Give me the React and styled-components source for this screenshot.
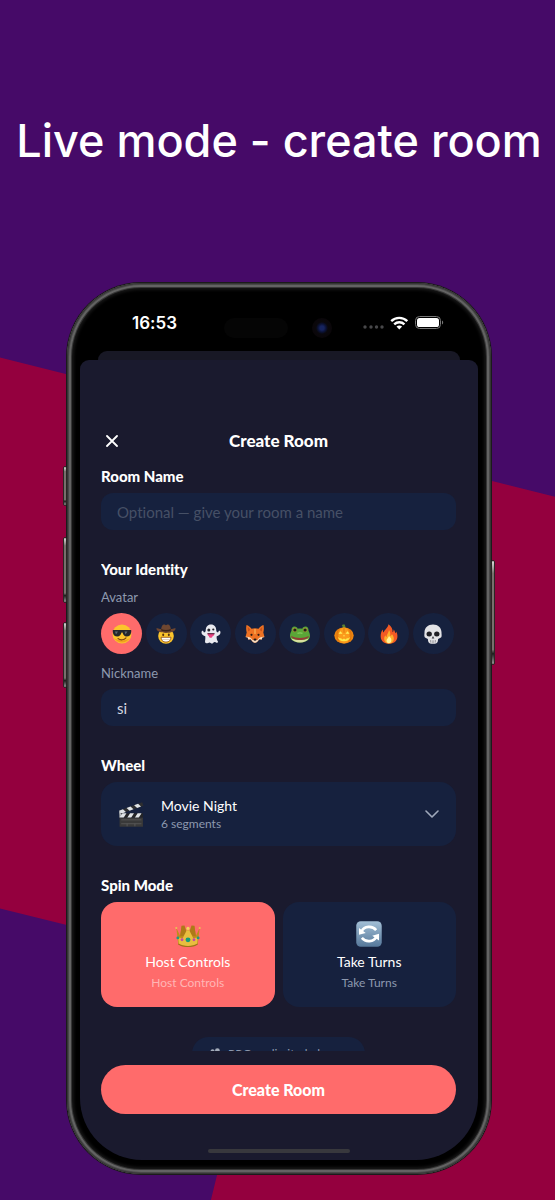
import React, { useState } from 'react';
import styled, { createGlobalStyle } from 'styled-components';

const GlobalStyle = createGlobalStyle`
  * {
    box-sizing: border-box;
  }
  body {
    margin: 0;
    background: #460a68;
  }
  button, input, select {
    font: inherit;
    color: inherit;
  }
`;

const Page = styled.main`
  position: relative;
  display: flex;
  flex-direction: column;
  height: 100vh;
  min-height: 1000px;
  overflow: hidden;
  background: #460a68;
  color: #fff;
  font-family: Lato, 'Open Sans', sans-serif;
  font-variant-ligatures: none;

  &::before {
    content: '';
    position: absolute;
    inset: 0;
    background: #94003e;
    clip-path: polygon(0 29.8%, 100% 41.4%, 100% 100%, 38% 100%, 48% 81.2%, 0 75.7%);
  }
`;

const Headline = styled.h1`
  position: relative;
  margin: 0;
  padding: 113px 0 114px 3px;
  font-family: Inter, sans-serif;
  font-size: 45px;
  font-weight: 500;
  line-height: 56px;
  text-align: center;
  white-space: nowrap;
`;

const Phone = styled.div`
  position: relative;
  display: flex;
  flex: 1;
  flex-direction: column;
  min-height: 0;
  margin: 0 64px 26px 67px;
  padding: 14px 13px;
  border-radius: 74px;
  background: #000;
  box-shadow:
    0 0 0 1px #1b1b1b,
    inset 0 0 0 1px #343434,
    inset 0 0 0 2px #484848,
    inset 0 0 0 4px #636363,
    inset 0 0 0 5px #363636,
    inset 0 0 3px 7px #161616;
`;

const SideButton = styled.span`
  position: absolute;
  top: ${props => props.$top};
  ${props => props.$side}: -4px;
  width: 4px;
  height: ${props => props.$height};
  border-radius: 2px;
  border: 1px solid #2b2624;
  background: linear-gradient(#ddd, #77706c 12%, #77706c 86%, #1d1d1d 90%, #999);
`;

const StatusBar = styled.div`
  display: flex;
  align-items: center;
  flex: none;
  height: 54px;
  padding: 0 34px 2px 52px;
`;

const Clock = styled.time`
  flex: 1;
  font-family: Inter, sans-serif;
  font-size: 17px;
  font-weight: 600;
`;

const Island = styled.span`
  display: flex;
  justify-content: space-between;
  width: 108px;
  margin: 10px 30px 0 0;
`;

const Speaker = styled.span`
  width: 64px;
  height: 20px;
  border-radius: 10px;
  background: #050505;
`;

const Lens = styled.span`
  width: 20px;
  height: 20px;
  border-radius: 50%;
  background: radial-gradient(circle, #16235e 0 2px, #0b1236 4px, #0a080c 6px, #0a0609 10px);
`;

const StatusIcons = styled.svg`
  width: 82px;
  height: 16px;
`;

const BackSheet = styled.div`
  flex: none;
  height: 9px;
  margin: 0 18px;
  border-radius: 9px 9px 0 0;
  background: #181825;
`;

const Sheet = styled.form`
  display: flex;
  flex: 1;
  flex-direction: column;
  min-height: 0;
  padding: 70px 22px 7px 21px;
  border-radius: 9px 9px 62px 62px;
  background: #1a1a2e;
`;

const SheetHeader = styled.header`
  display: grid;
  grid-template-columns: 22px 1fr 22px;
  align-items: center;
  flex: none;
  height: 22px;
`;

const CloseButton = styled.button`
  display: grid;
  place-items: center;
  width: 22px;
  height: 22px;
  padding: 0;
  border: none;
  background: none;
  cursor: pointer;
`;

const SheetTitle = styled.h2`
  margin: 0;
  font-size: 17px;
  font-weight: 900;
  line-height: 22px;
  text-align: center;
`;

const ScrollArea = styled.div`
  display: flex;
  flex: 1;
  flex-direction: column;
  gap: 29px;
  min-height: 0;
  padding-top: 14px;
  overflow-y: auto;
  scrollbar-width: none;
`;

const Section = styled.section`
  display: flex;
  flex: none;
  flex-direction: column;
  gap: 7px;
`;

const SectionTitle = styled.h3`
  margin: 0;
  font-size: 15px;
  font-weight: 900;
  line-height: 20px;
`;

const FieldLabel = styled.label`
  padding-top: ${props => props.$spaced ? '4px' : '3px'};
  color: #8d99ae;
  font-size: 13px;
  line-height: 17px;
`;

const TextInput = styled.input`
  width: 100%;
  height: 37px;
  padding: 0 16px;
  border: none;
  border-radius: 12px;
  outline: none;
  background: #16213e;
  color: #d5d8e0;
  font-size: 15px;

  &::placeholder {
    color: #465066;
    opacity: 1;
  }
`;

const AvatarRow = styled.div`
  display: flex;
  justify-content: space-between;
  padding-right: 2px;
`;

const HiddenRadio = styled.input`
  position: absolute;
  opacity: 0;
  pointer-events: none;
`;

const AvatarOption = styled.label`
  position: relative;
  display: grid;
  place-items: center;
  width: 41px;
  height: 41px;
  border-radius: 50%;
  background: ${props => props.$active ? '#ff6b6b' : '#16213e'};
  cursor: pointer;
`;

const Emoji = styled.svg`
  display: block;
  flex: none;
  width: ${props => props.$size || '20px'};
  height: ${props => props.$size || '20px'};
`;

const WheelCard = styled.label`
  display: flex;
  align-items: center;
  height: 64px;
  padding: 0 17px;
  border-radius: 16px;
  background: #16213e;
  cursor: pointer;
`;

const WheelText = styled.span`
  display: flex;
  flex: 1;
  flex-direction: column;
  margin-left: 17px;
`;

const WheelSelect = styled.select`
  height: 20px;
  padding: 0;
  border: none;
  outline: none;
  appearance: none;
  background: transparent;
  font-size: 14px;
  line-height: 20px;
  cursor: pointer;

  option {
    background: #16213e;
  }
`;

const WheelMeta = styled.span`
  color: #8d99ae;
  font-size: 12px;
  line-height: 16px;
`;

const ModeGrid = styled.div`
  display: grid;
  grid-template-columns: 1fr 1fr;
  gap: 8px;
`;

const ModeCard = styled.label`
  position: relative;
  display: flex;
  flex-direction: column;
  align-items: center;
  height: 105px;
  padding-top: 19px;
  border-radius: 16px;
  background: ${props => props.$active ? '#ff6b6b' : '#16213e'};
  cursor: pointer;
`;

const ModeName = styled.span`
  margin-top: 5px;
  font-size: 14px;
  line-height: 20px;
`;

const ModeHint = styled.span`
  margin-top: 3px;
  color: ${props => props.$active ? '#ffb5b5' : '#8d99ae'};
  font-size: 12px;
  line-height: 16px;
`;

const ProBadge = styled.div`
  display: flex;
  align-items: center;
  align-self: center;
  flex: none;
  gap: 7px;
  height: 33px;
  margin-top: 1px;
  padding: 0 17px;
  border-radius: 17px;
  background: #16213e;
  color: #8d99ae;
  font-size: 12px;
`;

const Footer = styled.footer`
  flex: none;
  padding: 14px 0 35px;
`;

const SubmitButton = styled.button`
  display: block;
  width: 100%;
  height: 49px;
  border: none;
  border-radius: 25px;
  background: #ff6b6b;
  font-size: 16px;
  font-weight: 900;
  cursor: pointer;
`;

const HomeIndicator = styled.div`
  flex: none;
  align-self: center;
  width: 40%;
  height: 4px;
  border-radius: 2px;
  background: #38383d;
`;

const drawings = {
  cool: (
    <>
      <circle cx="10" cy="10" r="9.5" fill="#fcc52c" />
      <path d="M2 14a9.5 9.5 0 0 0 16 0c-4 3-12 3-16 0z" fill="#f0a01e" />
      <path d="M.8 6h18.4v2c-.3 3-2 4.500-4.600 4.500-2.300 0-3.600-1.700-4.100-4h-1c-.5 2.300-1.800 4-4.100 4C2.800 12.500 1.100 11 .8 8z" fill="#23262b" />
      <path d="M3 7.500l3 0-2 3zM12.500 7.500h3l-2 3z" fill="#5d6670" />
      <path d="M6 14.500c2.500 2 6 1.700 8-.6" stroke="#7c4312" strokeWidth="1.100" fill="none" strokeLinecap="round" />
    </>
  ),
  cowboy: (
    <>
      <circle cx="10" cy="12" r="7.800" fill="#fcc52c" />
      <path d="M.3 4.500C2 3.600 3 5 5.200 5 5.500 2.200 6.500.6 8 .6c1 0 1.300.6 2 .6s1-.6 2-.6c1.500 0 2.500 1.600 2.800 4.400 2.200 0 3.200-1.400 4.900-.5-.5 3-4.700 4.400-9.700 4.400S.8 7.500.3 4.500z" fill="#6e4630" />
      <path d="M5.200 5c3 1.400 6.600 1.400 9.600 0l.1 1.400c-3 1.300-6.800 1.300-9.800 0z" fill="#3b241a" />
      <ellipse cx="7.200" cy="10.800" rx="1" ry="1.400" fill="#57330f" />
      <ellipse cx="12.800" cy="10.800" rx="1" ry="1.400" fill="#57330f" />
      <path d="M5 13.300h10c0 3-2 4.800-5 4.800s-5-1.800-5-4.800z" fill="#fff" stroke="#8d4c12" strokeWidth=".8" />
      <path d="M5.500 15.500h9" stroke="#c9a27c" strokeWidth=".5" />
    </>
  ),
  ghost: (
    <>
      <path d="M10 .6c3.400 0 5.200 2.400 5.300 6 .2 1.500.8 2 2 1.600.1-1.200.8-1.900 1.500-1.400 1 .7 1 2.800-.3 4-.9.9-2 1.200-2.800 1.500-.3 2.500.2 3.500 1.100 4.900.7 1.200-.6 2-2 1.200-1.300-.7-1.900-.2-2.700.7-.8.800-1.800.6-2.400-.1-.8-.9-1.500-.7-2.600-.1-1.400.7-2.700.5-3-.6C3.800 17 4.600 15.300 4.300 12.300c-.8-.3-1.900-.6-2.800-1.500C.2 9.600.2 7.500 1.200 6.800c.7-.5 1.400.2 1.500 1.400 1.200.4 1.800-.1 2-1.600.1-3.600 1.900-6 5.300-6z" fill="#e9eaf0" />
      <circle cx="7.800" cy="6" r="1.500" fill="#25252c" />
      <ellipse cx="12.300" cy="5.500" rx="1.100" ry="1" fill="#25252c" />
      <path d="M6.500 9.300h7c0 1.600-1 2.800-2 3-.3 2-3.300 2-3.600 0-.8-.5-1.400-1.500-1.400-3z" fill="#e94381" />
      <path d="M6.500 9.300h7v.9h-7z" fill="#2b1f29" />
    </>
  ),
  fox: (
    <>
      <path d="M1.500 1c2 .5 3.700 2 5 3.800 2.200-.7 4.800-.7 7 0 1.300-1.800 3-3.300 5-3.800.6 3 .4 5.500-.2 7.500l1.200 4.500-2.200.5-.5 2-2.500-.2C13 17 11.600 18.800 10 18.800S7 17 5.700 15.300l-2.500.2-.5-2L.5 13l1.200-4.500C1.100 6.500.9 4 1.500 1z" fill="#ee7223" />
      <path d="M2.800 3c1 .8 1.800 1.800 2.500 3L3.200 7.500C2.800 6 2.700 4.600 2.800 3zM17.200 3c-1 .8-1.800 1.800-2.500 3l2.100 1.500c.4-1.500.5-2.900.4-4.500z" fill="#c9541b" />
      <path d="M.5 13c3-.6 5.500.8 7 3h5c1.500-2.200 4-3.600 7-3l-2.200.5-.5 2-2.500-.2C13 17 11.600 18.800 10 18.800S7 17 5.700 15.300l-2.500.2-.5-2z" fill="#f8dcc0" />
      <circle cx="6.500" cy="10.800" r="1.100" fill="#2d1b12" />
      <circle cx="13.500" cy="10.800" r="1.100" fill="#2d1b12" />
      <ellipse cx="10" cy="15.700" rx="1.500" ry="1.100" fill="#1f1715" />
      <path d="M10 5v5" stroke="#f59a42" strokeWidth="2" />
    </>
  ),
  frog: (
    <>
      <path d="M4.500 2.500c1.800 0 2.800 1 3.200 2.200 1.500-.4 3.100-.4 4.600 0 .4-1.200 1.400-2.200 3.200-2.200 2 0 3.300 1.600 3 4.300C19.600 8.600 20 10.600 20 12c0 3.800-4.500 6.500-10 6.500S0 15.800 0 12c0-1.400.4-3.400 1.500-5.200-.3-2.700 1-4.300 3-4.300z" fill="#5aa637" />
      <path d="M1 14.300c4 2 14 2 18 0-1.400 2.700-4.800 4.200-9 4.200s-7.600-1.500-9-4.200z" fill="#d7dfa0" />
      <path d="M1 12c5 2.600 13 2.600 18 0-1 2.600-4.500 4-9 4s-8-1.400-9-4z" fill="#943c35" />
      <circle cx="4.700" cy="6" r="2.200" fill="#a8903a" />
      <circle cx="15.300" cy="6" r="2.200" fill="#a8903a" />
      <circle cx="4.900" cy="6" r="1.600" fill="#1d2318" />
      <circle cx="15.100" cy="6" r="1.600" fill="#1d2318" />
      <path d="M7.500 9.300c1.500-.6 3.500-.6 5 0" stroke="#83cc58" strokeWidth="1.300" fill="none" />
    </>
  ),
  pumpkin: (
    <>
      <path d="M8.600 4.500C8.800 2.800 8.500 2 7.800 1l2.500-.7c1 1.200 1.300 2.500 1.300 4.200z" fill="#5a8130" />
      <ellipse cx="10" cy="11.500" rx="9.700" ry="8" fill="#ee850f" />
      <ellipse cx="10" cy="11.500" rx="5.500" ry="8" fill="#fb9b1c" />
      <path d="M10 3.800v5M4.500 5.500c-2 3-2 8 0 12M15.500 5.500c2 3 2 8 0 12" stroke="#cf6a0b" strokeWidth=".6" fill="none" />
      <path d="M4.500 9.800l2-2.500 2 2.500zM11.500 9.800l2-2.500 2 2.500zM9 12.200l1-1.500 1 1.500z" fill="#ffef5a" />
      <path d="M3.800 13l2.200 1.600 1-.6 1.200 1.400 1.200-.7 1.200 0 1.200.7L13 14l1 .6 2.200-1.600c-.7 2.700-3 4.300-6.200 4.300s-5.500-1.600-6.200-4.300z" fill="#ffe84a" />
    </>
  ),
  fire: (
    <>
      <path d="M9.500.2c3 2 4.500 5 4 8 .8-.3 1.200-1.400 1.100-2.600 1 1 1.500 2.400 1.500 3.700.7-.3 1-.9 1-1.700 1 1.500 1.500 3.400 1.300 5.400-.3 4.200-3.700 6.800-8.400 6.800s-8-2.800-8.300-6.800c-.2-3 .7-5.300 1.900-7.400.3 1.500.5 2.500 1.200 3C5.200 5.500 9 4 9.500.2z" fill="#f25a24" />
      <path d="M10 6c1.500 2 1.400 4 1.200 6 .9-.2 1.500-1 1.700-2 1.900 2.500 2.500 4.700 1.400 7-.8 1.700-2.300 2.500-4.300 2.500-2.500 0-4.600-1.500-4.800-4.300-.1-1.700.5-3 1.200-4 .2 1 .6 1.600 1.200 1.800C7.500 10.500 9.500 9 10 6z" fill="#fdae2b" />
      <path d="M10 12c1.500 1.500 3 3 2.300 5.200-.4 1.300-1.300 2-2.400 2-1.400 0-2.400-.9-2.400-2.500C7.500 15 9.500 14 10 12z" fill="#fff59d" />
    </>
  ),
  skull: (
    <>
      <path d="M10 .5c5 0 8.500 3.300 8.500 7.800 0 2 .3 2.700.1 4-.2 1.400-1.700 2-3 2.400-.6.2-.6 1-.7 2.200-.2 2-2 2.800-4.900 2.800s-4.700-.8-4.900-2.800c-.1-1.200-.1-2-.7-2.200-1.300-.4-2.800-1-3-2.400-.2-1.300.1-2 .1-4C1.500 3.800 5 .5 10 .5z" fill="#e3e3e6" />
      <ellipse cx="6.200" cy="10" rx="2.700" ry="2.500" fill="#1f1f24" />
      <ellipse cx="13.800" cy="10" rx="2.700" ry="2.500" fill="#1f1f24" />
      <path d="M10 12l1.300 2.400H8.700z" fill="#37373e" />
      <path d="M7.500 16v2.500M9.200 16.300v2.700M10.800 16.300v2.700M12.500 16v2.500" stroke="#77777d" strokeWidth=".6" />
    </>
  ),
  clapper: (
    <>
      <path d="M.8 7.500L18.600 1l1 2.700L2 10z" fill="#2d2e30" />
      <path d="M.8 7.500l3-1.100 2.300 2.100L2 10zM6.600 5.400l3-1.100 2.300 2.100-3 1.100zM12.400 3.300l3-1.100 2.300 2.100-3 1.100z" fill="#dfe3e6" />
      <path d="M1.200 9.500h18v3.300h-18z" fill="#242527" />
      <path d="M3.500 9.500h3l-2.200 3.300H1.200v-.6zM9.300 9.500h3l-2.200 3.300h-3zM15.100 9.500h3l-2.200 3.300h-3z" fill="#dfe3e6" />
      <path d="M1.200 12.800h18v7H1.200z" fill="#393939" />
      <path d="M2.500 14.500H18M2.500 17.500H18M7 17.500v2M13 17.500v2" stroke="#666" strokeWidth=".5" />
      <path d="M.8 7.500l2 3-1.600 2z" fill="#b9bdc0" />
    </>
  ),
  crown: (
    <g transform="translate(0 1.7)">
      <path d="M1 3.500l2.800 6 1.500-7.200L8 8l2-4.500L12 8l2.700-5.700 1.500 7.200 2.800-6-1.500 12.600c-3.600 2.700-11.400 2.700-15 0z" fill="#c08c1c" />
      <path d="M5 2l2.300-.3L9 7l-3 3-2 0zM15 2l-2.300-.3L11 7l3 3 2 0z" fill="#ad7a17" />
      <path d="M2.400 11L6 11.500 9 5.500h2l3 6 3.600-.5-.6 5c-3.300 2.300-10.700 2.300-14 0z" fill="#e8be3f" />
      <path d="M2.600 16c3.600 2.600 11.200 2.600 14.800 0" stroke="#9d7319" strokeWidth=".8" fill="none" />
      <circle cx="1" cy="3.700" r=".8" fill="#e9c552" />
      <circle cx="19" cy="3.700" r=".8" fill="#e9c552" />
      <circle cx="10" cy="4" r="1.300" fill="#f4d45e" />
      <circle cx="10" cy="12.800" r="1.900" fill="#169c78" />
      <circle cx="5.400" cy="12.700" r="1.100" fill="#c247a7" />
      <circle cx="14.600" cy="12.700" r="1.100" fill="#c247a7" />
      <circle cx="2.200" cy="11.300" r="1.100" fill="#199c83" />
      <circle cx="17.800" cy="11.300" r="1.100" fill="#199c83" />
    </g>
  ),
  turns: (
    <>
      <defs>
        <linearGradient id="tile" x1="0" y1="0" x2="0" y2="1">
          <stop offset="0" stopColor="#a3bfd6" />
          <stop offset="1" stopColor="#56789a" />
        </linearGradient>
      </defs>
      <rect x=".2" y=".2" width="19.600" height="19.600" rx="3.500" fill="url(#tile)" />
      <path d="M4.400 7.800C6.300 3.900 12.500 3.300 15.500 7M15.600 12.200c-1.900 3.900-8.100 4.500-11.100.8" stroke="#fff" strokeWidth="2" fill="none" />
      <path d="M2.300 5.300v5.200l5.200-1.300zM17.700 9.800V15l-5.200-3.700z" fill="#fff" />
    </>
  ),
  people: (
    <>
      <circle cx="6" cy="5.500" r="3.500" fill="#a4acba" />
      <circle cx="14" cy="4.500" r="4" fill="#a4acba" />
      <path d="M0 17c0-9 12-9 12 0zM9 17c0-10 11-10 11 0z" fill="#a4acba" />
    </>
  ),
};

const Drawing = ({ name, size }) => (
  <Emoji viewBox="0 0 20 20" $size={size} aria-hidden="true">
    {drawings[name]}
  </Emoji>
);

const avatars = ['cool', 'cowboy', 'ghost', 'fox', 'frog', 'pumpkin', 'fire', 'skull'];

const modes = [
  { id: 'host', icon: 'crown', name: 'Host Controls', hint: 'Host Controls' },
  { id: 'turns', icon: 'turns', name: 'Take Turns', hint: 'Take Turns' },
];

const App = () => {
  const [avatar, setAvatar] = useState('cool');
  const [mode, setMode] = useState('host');
  const [roomName, setRoomName] = useState('');
  const [nickname, setNickname] = useState('si');

  const handleSubmit = (e) => {
    e.preventDefault();
  };

  return (
    <Page>
      <GlobalStyle />
      <Headline>Live mode - create room</Headline>

      <Phone>
        <SideButton $side="left" $top="183px" $height="40px" />
        <SideButton $side="left" $top="254px" $height="66px" />
        <SideButton $side="left" $top="339px" $height="66px" />
        <SideButton $side="right" $top="277px" $height="105px" />

        <StatusBar>
          <Clock>16:53</Clock>
          <Island>
            <Speaker />
            <Lens />
          </Island>
          <StatusIcons viewBox="0 0 82 16" aria-hidden="true">
            <g fill="#48484a">
              <circle cx="3" cy="12" r="1.700" />
              <circle cx="9" cy="12" r="1.700" />
              <circle cx="14.500" cy="12" r="1.700" />
              <circle cx="20" cy="12" r="1.700" />
            </g>
            <g fill="none" stroke="#fff" strokeWidth="2.400">
              <path d="M29.200 6.200c4.500-4.400 11.600-4.400 16.100 0" />
              <path d="M32.200 9.400c2.900-2.800 7.300-2.800 10.200 0" />
            </g>
            <path d="M34.500 11.600c1.600-1.500 4-1.500 5.600 0l-2.800 2.900z" fill="#fff" />
            <rect x="53.500" y="1.500" width="25" height="12" rx="4" fill="none" stroke="#777" />
            <rect x="55" y="3" width="22" height="9" rx="2.600" fill="#fff" />
            <path d="M80 5.500c1.600.5 1.600 3.500 0 4z" fill="#777" />
          </StatusIcons>
        </StatusBar>

        <BackSheet />
        <Sheet onSubmit={handleSubmit}>
          <SheetHeader>
            <CloseButton type="button" aria-label="Close">
              <svg width="12" height="12" viewBox="0 0 12 12" aria-hidden="true">
                <path d="M1 1l10 10M11 1L1 11" stroke="#fff" strokeWidth="1.800" strokeLinecap="round" />
              </svg>
            </CloseButton>
            <SheetTitle>Create Room</SheetTitle>
          </SheetHeader>

          <ScrollArea>
            <Section>
              <SectionTitle as="label" htmlFor="room">Room Name</SectionTitle>
              <TextInput
                id="room"
                value={roomName}
                placeholder="Optional — give your room a name"
                onChange={(e) => setRoomName(e.target.value)}
              />
            </Section>

            <Section>
              <SectionTitle>Your Identity</SectionTitle>
              <FieldLabel as="span">Avatar</FieldLabel>
              <AvatarRow role="radiogroup" aria-label="Avatar">
                {avatars.map((name) => (
                  <AvatarOption key={name} $active={avatar === name}>
                    <HiddenRadio
                      type="radio"
                      name="avatar"
                      aria-label={name}
                      checked={avatar === name}
                      onChange={() => setAvatar(name)}
                    />
                    <Drawing name={name} />
                  </AvatarOption>
                ))}
              </AvatarRow>
              <FieldLabel htmlFor="nickname" $spaced>Nickname</FieldLabel>
              <TextInput
                id="nickname"
                value={nickname}
                onChange={(e) => setNickname(e.target.value)}
              />
            </Section>

            <Section>
              <SectionTitle>Wheel</SectionTitle>
              <WheelCard>
                <Drawing name="clapper" size="26px" />
                <WheelText>
                  <WheelSelect aria-label="Wheel" defaultValue="movie">
                    <option value="movie">Movie Night</option>
                  </WheelSelect>
                  <WheelMeta>6 segments</WheelMeta>
                </WheelText>
                <svg width="14" height="8" viewBox="0 0 14 8" aria-hidden="true">
                  <path d="M1 1l6 6 6-6" fill="none" stroke="#a0a9bb" strokeWidth="1.600" strokeLinecap="round" strokeLinejoin="round" />
                </svg>
              </WheelCard>
            </Section>

            <Section>
              <SectionTitle>Spin Mode</SectionTitle>
              <ModeGrid role="radiogroup" aria-label="Spin Mode">
                {modes.map((item) => (
                  <ModeCard key={item.id} $active={mode === item.id}>
                    <HiddenRadio
                      type="radio"
                      name="mode"
                      checked={mode === item.id}
                      onChange={() => setMode(item.id)}
                    />
                    <Drawing name={item.icon} size="26px" />
                    <ModeName>{item.name}</ModeName>
                    <ModeHint $active={mode === item.id}>{item.hint}</ModeHint>
                  </ModeCard>
                ))}
              </ModeGrid>
            </Section>

            <ProBadge>
              <Drawing name="people" size="12px" />
              PRO: unlimited players
            </ProBadge>
          </ScrollArea>

          <Footer>
            <SubmitButton type="submit">Create Room</SubmitButton>
          </Footer>
          <HomeIndicator />
        </Sheet>
      </Phone>
    </Page>
  );
};

export default App;
